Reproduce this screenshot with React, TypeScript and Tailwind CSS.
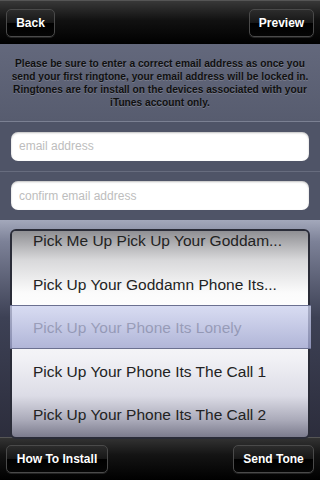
import React from "react";

const rows = [
  "Pick Me Up Pick Up Your Goddam...",
  "Pick Up Your Goddamn Phone Its...",
  "Pick Up Your Phone Its Lonely",
  "Pick Up Your Phone Its The Call 1",
  "Pick Up Your Phone Its The Call 2",
];

function BarButton({ label, width }: { label: string; width: string }) {
  return (
    <button
      className={`relative h-[28px] ${width} overflow-hidden rounded-[5px] border border-[#4a4a4a] bg-[linear-gradient(#2c2c2c,#161616_50%,#000_50%,#050505)] text-[12px] font-bold text-white shadow-[0_1px_0_rgba(255,255,255,0.12)]`}
    >
      {label}
    </button>
  );
}

export default function App() {
  return (
    <div className="flex h-[480px] w-[320px] flex-col overflow-hidden font-['Liberation_Sans',Arial,sans-serif]">
      {/* top bar */}
      <div className="flex h-[44px] shrink-0 items-center justify-between border-t border-[#555] bg-[linear-gradient(#383838,#111_45%,#000)] px-[6px]">
        <BarButton label="Back" width="w-[49px]" />
        <BarButton label="Preview" width="w-[65px]" />
      </div>

      {/* notice */}
      <div className="flex h-[77px] shrink-0 items-center justify-center bg-[linear-gradient(#63687c,#575c6f)] px-[7px] text-center text-[10.2px] leading-[13px] font-bold text-[#101010] [text-shadow:0_1px_0_rgba(255,255,255,0.18)]">
        <p>
          Please be sure to enter a correct email address as once you send your first ringtone, your email
          address will be locked in. Ringtones are for install on the devices associated with your iTunes
          account only.
        </p>
      </div>

      {/* fields */}
      <div className="flex h-[99px] shrink-0 flex-col border-t border-[#7b8092] bg-[#4f5467]">
        <div className="flex h-[49px] items-center px-[11px]">
          <input
            placeholder="email address"
            className="h-[29px] w-full rounded-[7px] bg-white px-[8px] text-[12px] text-black shadow-[inset_0_1px_2px_rgba(0,0,0,0.25)] outline-none placeholder:text-[#bdbdbd]"
          />
        </div>
        <div className="h-px bg-[#676c7e]" />
        <div className="flex h-[49px] items-center px-[11px]">
          <input
            placeholder="confirm email address"
            className="h-[29px] w-full rounded-[7px] bg-white px-[8px] text-[12px] text-black shadow-[inset_0_1px_2px_rgba(0,0,0,0.25)] outline-none placeholder:text-[#bdbdbd]"
          />
        </div>
      </div>

      {/* picker */}
      <div className="flex h-[217px] shrink-0 flex-col bg-[linear-gradient(#a3a8bb,#7c8197_10%,#3d4155_45%,#2c2d3c)] px-[10px] pt-[9px] pb-[7px]">
        <div className="relative flex-1 rounded-[6px] border-2 border-[#2a2c38]">
          <div className="h-full overflow-hidden rounded-[4px] bg-[linear-gradient(#8f8f93,#d8d8da_14%,#fbfbfb_30%,#ffffff_40%,#f1f1f5_62%,#dcdce6_80%,#a9a9b8_92%,#7c7c8e)]">
            <div className="-mt-[12px] flex flex-col">
              {rows.map((r) => (
                <div
                  key={r}
                  className="flex h-[43.5px] shrink-0 items-center pl-[21px] text-[15.5px] whitespace-nowrap text-[#222]"
                >
                  {r}
                </div>
              ))}
            </div>
          </div>
          {/* selection band */}
          <div className="absolute top-[74px] -right-[3px] -left-[2px] h-[44px] border-y border-[#6b7090] bg-[linear-gradient(rgba(205,210,238,0.78),rgba(160,166,208,0.8))]" />
        </div>
      </div>

      {/* bottom bar */}
      <div className="flex flex-1 items-center justify-between border-t border-[#555] bg-[linear-gradient(#333,#141414_40%,#000)] px-[6px]">
        <BarButton label="How To Install" width="w-[102px]" />
        <BarButton label="Send Tone" width="w-[81px]" />
      </div>
    </div>
  );
}
